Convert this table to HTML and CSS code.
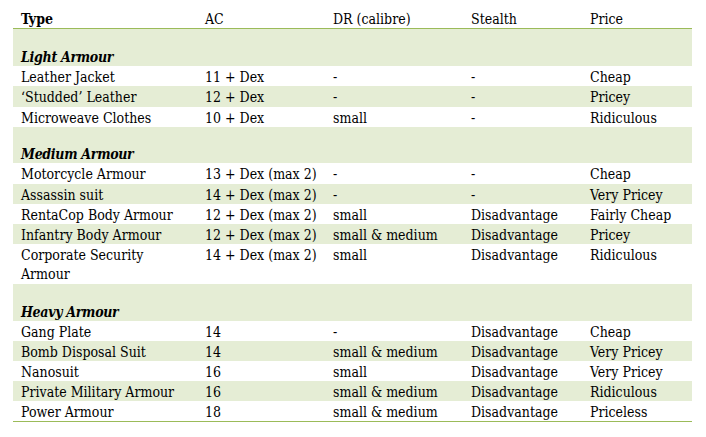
FILE: index.html
```html
<!DOCTYPE html>
<html>
<head>
<meta charset="utf-8">
<link rel="stylesheet" href="styles.css">
</head>
<body>
<table class="armour">
  <colgroup>
    <col class="c-type"><col class="c-ac"><col class="c-dr"><col class="c-st"><col class="c-pr">
  </colgroup>
  <thead>
    <tr><th class="first">Type</th><th>AC</th><th>DR (calibre)</th><th>Stealth</th><th>Price</th></tr>
  </thead>
  <tbody>
    <tr class="group"><td colspan="5">Light Armour</td></tr>
    <tr><td>Leather Jacket</td><td>11 + Dex</td><td>-</td><td>-</td><td>Cheap</td></tr>
    <tr class="alt roomy"><td>‘Studded’ Leather</td><td>12 + Dex</td><td>-</td><td>-</td><td>Pricey</td></tr>
    <tr><td>Microweave Clothes</td><td>10 + Dex</td><td>small</td><td>-</td><td>Ridiculous</td></tr>
    <tr class="group g2"><td colspan="5">Medium Armour</td></tr>
    <tr class="roomy"><td>Motorcycle Armour</td><td>13 + Dex (max 2)</td><td>-</td><td>-</td><td>Cheap</td></tr>
    <tr class="alt"><td>Assassin suit</td><td>14 + Dex (max 2)</td><td>-</td><td>-</td><td>Very Pricey</td></tr>
    <tr><td>RentaCop Body Armour</td><td>12 + Dex (max 2)</td><td>small</td><td>Disadvantage</td><td>Fairly Cheap</td></tr>
    <tr class="alt"><td>Infantry Body Armour</td><td>12 + Dex (max 2)</td><td>small &amp; medium</td><td>Disadvantage</td><td>Pricey</td></tr>
    <tr class="tall"><td>Corporate Security<br>Armour</td><td>14 + Dex (max 2)</td><td>small</td><td>Disadvantage</td><td>Ridiculous</td></tr>
    <tr class="group"><td colspan="5">Heavy Armour</td></tr>
    <tr><td>Gang Plate</td><td>14</td><td>-</td><td>Disadvantage</td><td>Cheap</td></tr>
    <tr class="alt"><td>Bomb Disposal Suit</td><td>14</td><td>small &amp; medium</td><td>Disadvantage</td><td>Very Pricey</td></tr>
    <tr><td>Nanosuit</td><td>16</td><td>small</td><td>Disadvantage</td><td>Very Pricey</td></tr>
    <tr class="alt"><td>Private Military Armour</td><td>16</td><td>small &amp; medium</td><td>Disadvantage</td><td>Ridiculous</td></tr>
    <tr class="last"><td>Power Armour</td><td>18</td><td>small &amp; medium</td><td>Disadvantage</td><td>Priceless</td></tr>
  </tbody>
</table>
</body>
</html>
```
FILE: styles.css
```css
html, body {
  margin: 0;
  padding: 0;
  background: #ffffff;
}
body {
  padding: 7px 0 0 13px;
  font-family: "DejaVu Serif Condensed", "DejaVu Serif", serif;
  font-stretch: condensed;
  font-size: 14px;
  color: #000000;
}
.armour {
  border-collapse: collapse;
  width: 679px;
  table-layout: fixed;
}
.c-type { width: 184px; }
.c-ac { width: 128px; }
.c-dr { width: 138px; }
.c-st { width: 119px; }
.c-pr { width: 110px; }
.armour th, .armour td {
  padding: 2px 0 0 8px;
  text-align: left;
  vertical-align: top;
  line-height: 18px;
  white-space: nowrap;
}
.armour th {
  font-weight: normal;
  padding-top: 4px;
  line-height: 17px;
  border-bottom: 1px solid #9bbb59;
}
.armour th.first {
  font-weight: bold;
}
.armour tr.alt td {
  background: #e5edd5;
}
.armour tr.roomy td {
  padding-bottom: 1px;
}
.armour tr.group td {
  background: #e5edd5;
  font-weight: bold;
  font-style: italic;
  padding-top: 19px;
  letter-spacing: -0.3px;
}
.armour tr.group.g2 td {
  padding-top: 18px;
}
.armour tr.tall td {
  line-height: 19px;
}
.armour tr.last td {
  border-bottom: 1px solid #9bbb59;
}
```
